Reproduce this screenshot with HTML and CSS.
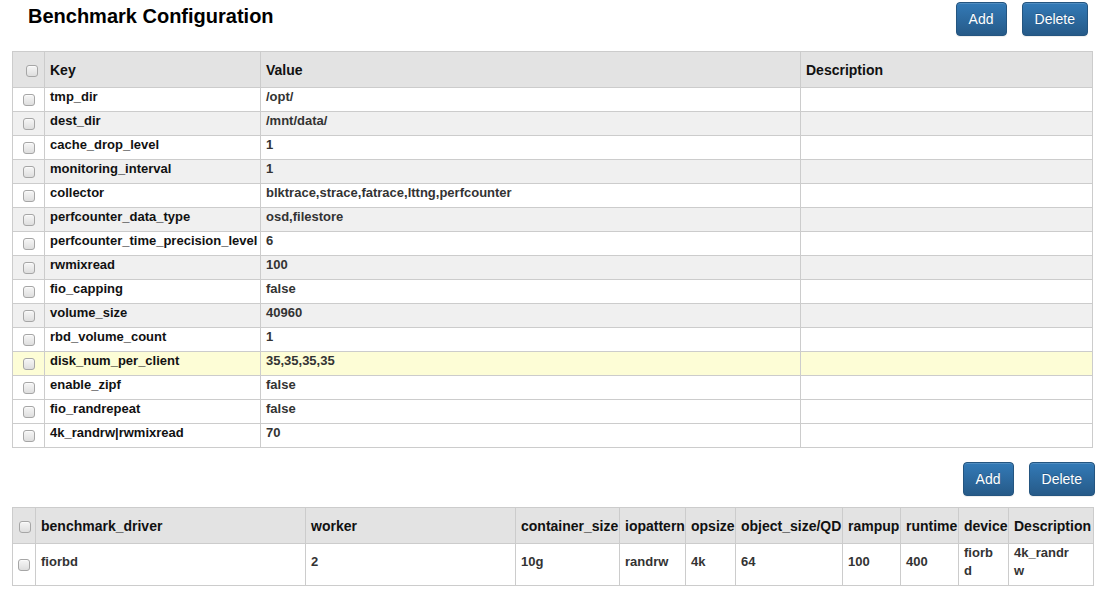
FILE: index.html
```html
<!DOCTYPE html>
<html lang="en">
<head>
<meta charset="utf-8">
<title>Benchmark Configuration</title>
<link rel="stylesheet" href="styles.css">
</head>
<body>
<div class="page">
  <div class="topbar">
    <h2 class="title">Benchmark Configuration</h2>
    <div class="actions">
      <button class="btn">Add</button>
      <button class="btn">Delete</button>
    </div>
  </div>

  <table class="grid grid-config">
    <colgroup>
      <col class="c-cb"><col class="c-key"><col class="c-value"><col class="c-desc">
    </colgroup>
    <thead>
      <tr>
        <th class="cb-cell"><span class="cb"></span></th>
        <th>Key</th>
        <th>Value</th>
        <th>Description</th>
      </tr>
    </thead>
    <tbody>
      <tr><td class="cb-cell"><span class="cb"></span></td><td class="key">tmp_dir</td><td>/opt/</td><td></td></tr>
      <tr class="alt"><td class="cb-cell"><span class="cb"></span></td><td class="key">dest_dir</td><td>/mnt/data/</td><td></td></tr>
      <tr><td class="cb-cell"><span class="cb"></span></td><td class="key">cache_drop_level</td><td>1</td><td></td></tr>
      <tr class="alt"><td class="cb-cell"><span class="cb"></span></td><td class="key">monitoring_interval</td><td>1</td><td></td></tr>
      <tr><td class="cb-cell"><span class="cb"></span></td><td class="key">collector</td><td>blktrace,strace,fatrace,lttng,perfcounter</td><td></td></tr>
      <tr class="alt"><td class="cb-cell"><span class="cb"></span></td><td class="key">perfcounter_data_type</td><td>osd,filestore</td><td></td></tr>
      <tr><td class="cb-cell"><span class="cb"></span></td><td class="key">perfcounter_time_precision_level</td><td>6</td><td></td></tr>
      <tr class="alt"><td class="cb-cell"><span class="cb"></span></td><td class="key">rwmixread</td><td>100</td><td></td></tr>
      <tr><td class="cb-cell"><span class="cb"></span></td><td class="key">fio_capping</td><td>false</td><td></td></tr>
      <tr class="alt"><td class="cb-cell"><span class="cb"></span></td><td class="key">volume_size</td><td>40960</td><td></td></tr>
      <tr><td class="cb-cell"><span class="cb"></span></td><td class="key">rbd_volume_count</td><td>1</td><td></td></tr>
      <tr class="hl"><td class="cb-cell"><span class="cb"></span></td><td class="key">disk_num_per_client</td><td>35,35,35,35</td><td></td></tr>
      <tr><td class="cb-cell"><span class="cb"></span></td><td class="key">enable_zipf</td><td>false</td><td></td></tr>
      <tr><td class="cb-cell"><span class="cb"></span></td><td class="key">fio_randrepeat</td><td>false</td><td></td></tr>
      <tr><td class="cb-cell"><span class="cb"></span></td><td class="key">4k_randrw|rwmixread</td><td>70</td><td></td></tr>
    </tbody>
  </table>

  <div class="actions actions-lower">
    <button class="btn">Add</button>
    <button class="btn">Delete</button>
  </div>

  <table class="grid grid-tests">
    <colgroup>
      <col class="t-cb"><col class="t-driver"><col class="t-worker"><col class="t-container"><col class="t-io"><col class="t-opsize"><col class="t-object"><col class="t-rampup"><col class="t-runtime"><col class="t-device"><col class="t-desc">
    </colgroup>
    <thead>
      <tr>
        <th class="cb-cell"><span class="cb"></span></th>
        <th>benchmark_driver</th>
        <th>worker</th>
        <th>container_size</th>
        <th>iopattern</th>
        <th>opsize</th>
        <th>object_size/QD</th>
        <th>rampup</th>
        <th>runtime</th>
        <th>device</th>
        <th>Description</th>
      </tr>
    </thead>
    <tbody>
      <tr>
        <td class="cb-cell"><span class="cb"></span></td>
        <td>fiorbd</td>
        <td>2</td>
        <td>10g</td>
        <td>randrw</td>
        <td>4k</td>
        <td>64</td>
        <td>100</td>
        <td>400</td>
        <td>fiorbd</td>
        <td>4k_randrw</td>
      </tr>
    </tbody>
  </table>
</div>
</body>
</html>
```

FILE: styles.css
```css
* { box-sizing: border-box; }

body {
  margin: 0;
  font-family: "Liberation Sans", Arial, sans-serif;
  color: #333;
  background: #fff;
}

.page {
  width: 1103px;
}

.topbar {
  display: flex;
  justify-content: space-between;
  align-items: flex-start;
  height: 51px;
  padding: 2px 15px 0 28px;
}

.title {
  margin: 2px 0 0 0;
  font-size: 20px;
  line-height: 24px;
  font-weight: bold;
  color: #000;
}

.actions {
  display: flex;
  gap: 15px;
}

.actions-lower {
  justify-content: flex-end;
  padding-right: 8px;
  margin-top: 14px;
  margin-bottom: 11px;
}

.btn {
  font-family: inherit;
  font-size: 14px;
  line-height: 20px;
  padding: 6px 12px;
  height: 34px;
  color: #fff;
  border: 1px solid #245580;
  border-radius: 4px;
  background-color: #265a88;
  background-image: linear-gradient(to bottom, #337ab7 0%, #265a88 100%);
  text-shadow: 0 -1px 0 rgba(0, 0, 0, 0.2);
  box-shadow: inset 0 1px 0 rgba(255, 255, 255, 0.15), 0 1px 1px rgba(0, 0, 0, 0.075);
  cursor: pointer;
}

.grid {
  border-collapse: collapse;
  table-layout: fixed;
  margin-left: 12px;
}

.grid th,
.grid td {
  border: 1px solid #ccc;
  text-align: left;
  vertical-align: middle;
  font-weight: bold;
}

.grid th {
  height: 36px;
  padding: 0 5px;
  font-size: 14px;
  line-height: 20px;
  color: #111;
  background: #e3e3e3;
  white-space: nowrap;
}

.grid td {
  padding: 0 5px 5px 5px;
  font-size: 13px;
  line-height: 18px;
  color: #333;
  height: 24px;
}

.grid td.key { color: #111; }

.grid .cb-cell {
  padding: 0;
  text-align: center;
}

.grid th.cb-cell { padding-left: 6px; }

.cb {
  display: inline-block;
  vertical-align: middle;
  width: 12px;
  height: 12px;
  border: 1px solid #a6a6a6;
  border-radius: 3px;
  background: linear-gradient(to bottom, #f6f6f6 0%, #dedede 100%);
  box-shadow: inset 0 1px 0 rgba(255, 255, 255, 0.6);
}

.grid-config { width: 1080px; }
.grid-config tbody tr { background: #fff; }
.grid-config tbody tr.alt { background: #f0f0f0; }
.grid-config tbody tr.hl { background: #fdfdd6; }

.c-cb { width: 32px; }
.c-key { width: 216px; }
.c-value { width: 540px; }
.c-desc { width: 292px; }

.grid-tests { width: 1081px; }
.grid-tests th { padding: 0 0 0 5px; }
.grid-tests th.cb-cell { padding: 0 0 0 2px; }
.grid-tests td {
  padding: 0 14px 5px 5px;
  word-break: break-all;
}
.grid-tests td.cb-cell { padding: 0; }

.t-cb { width: 23px; }
.t-driver { width: 270px; }
.t-worker { width: 210px; }
.t-container { width: 104px; }
.t-io { width: 66px; }
.t-opsize { width: 50px; }
.t-object { width: 107px; }
.t-rampup { width: 58px; }
.t-runtime { width: 58px; }
.t-device { width: 50px; }
.t-desc { width: 85px; }
```
